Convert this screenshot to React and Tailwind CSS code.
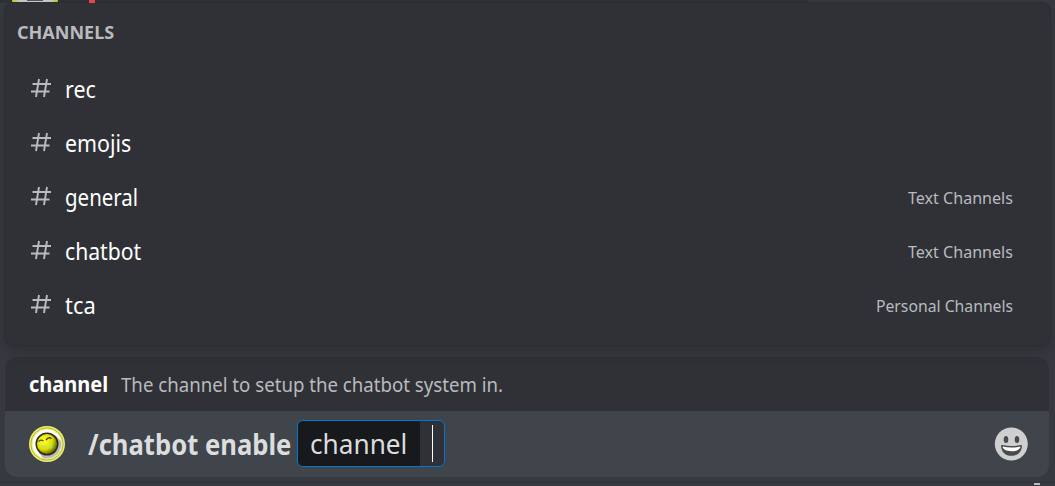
const channels = [
  { name: 'rec', fit: 'scale-x-[.93]' },
  { name: 'emojis', fit: 'scale-x-[.93]' },
  { name: 'general', fit: 'scale-x-[.89]', category: 'Text Channels', categoryFit: 'scale-x-[.946]' },
  { name: 'chatbot', fit: 'scale-x-[.92]', category: 'Text Channels', categoryFit: 'scale-x-[.946]' },
  { name: 'tca', fit: 'scale-x-[.95]', category: 'Personal Channels', categoryFit: 'scale-x-[.926]' },
];

function HashIcon() {
  return (
    <svg className="mb-1 h-5 w-5 shrink-0" viewBox="0 0 20 20" fill="none" stroke="#b9bbbe" strokeWidth="1.9">
      <path d="M8 1 5 19M16 1l-3 18M1.500 6H20M0 13.500h18.500" />
    </svg>
  );
}

function Avatar() {
  return (
    <svg className="h-9 w-9 shrink-0" viewBox="0 0 36 36">
      <defs>
        <radialGradient id="ball" cx=".35" cy=".35" r=".7">
          <stop offset="0" stopColor="#ffff35" />
          <stop offset=".6" stopColor="#dede00" />
          <stop offset="1" stopColor="#636300" />
        </radialGradient>
      </defs>
      <circle cx="18" cy="18" r="18" fill="#eeef70" />
      <circle cx="18" cy="18" r="16.2" fill="none" stroke="#b5b53b" strokeWidth="1" />
      <circle cx="18" cy="18" r="14.500" fill="#fff" />
      <path d="M26 9 32 15A14.500 14.500 0 0 1 14 32L10 27Z" fill="#b9b9bb" />
      <circle cx="18" cy="18" r="11.5" fill="#292b1d" />
      <circle cx="18" cy="18" r="10" fill="url(#ball)" />
      <path d="M9.500 15.500q2.500-2.500 5-.5M17 14q2.500-3.500 5.500-1.500" fill="none" stroke="#494900" strokeWidth="1.3" />
      <path d="m13 20 4 .5-2 2ZM21.500 18.500H23v4h-1.500Z" fill="#8ceb95" />
    </svg>
  );
}

function Smiley() {
  return (
    <svg className="h-[34px] w-[34px] shrink-0" viewBox="0 0 34 34">
      <circle cx="17.3" cy="17" r="16.5" fill="#cfcfcf" />
      <ellipse cx="12" cy="12.5" rx="2.3" ry="3.5" fill="#484b4c" />
      <ellipse cx="23" cy="12.5" rx="2.3" ry="3.5" fill="#484b4c" />
      <path d="M7 19q0-1.200 1.500-.9 9 2 18 0 1.500-.3 1.500.9c-.5 6.500-4.500 9.800-10.500 9.800S7.500 25.500 7 19Z" fill="#484b4c" />
      <path d="M8.500 19.600q9 2 18 0c-.4 2.900-3.500 4.600-9 4.600s-8.600-1.700-9-4.600Z" fill="#fff" />
    </svg>
  );
}

export default function App() {
  return (
    <div className="relative flex h-[486px] w-[1055px] flex-col overflow-hidden bg-[#36393f] pt-[3px] font-['Noto_Sans','Open_Sans',sans-serif]">
      <div className="absolute top-0 left-0 h-[3px] w-[808px] bg-[#2f3136]" />
      <div className="absolute top-0 left-3 h-[3px] w-[46px] rounded-b-full bg-[#c8cd4a]" />
      <div className="absolute top-0 left-[17px] h-[3px] w-9 rounded-b-full bg-[#cacace]" />
      <div className="absolute top-0 left-[27px] h-px w-4 bg-[#55575c]" />
      <section className="relative ml-[5px] h-[342px] w-[1045px] shrink-0 rounded-lg bg-[#2f3136] shadow-[0_0_0_1px_#2b2d31,0_6px_14px_#0003]">
        <h2 className="flex h-[60px] items-center pb-0.5 pl-3 text-[18px] font-bold text-[#b9bbbe]">CHANNELS</h2>
        <ul>
          {channels.map((c) => (
            <li key={c.name} className="flex h-[54px] items-center pr-[37px] pl-[26px]">
              <HashIcon />
              <span className={`mb-0.5 ml-3.5 origin-left text-[23px] text-white ${c.fit}`}>{c.name}</span>
              <span className={`ml-auto origin-right text-[17px] text-[#b9bbbe] ${c.categoryFit ?? ''}`}>{c.category}</span>
            </li>
          ))}
        </ul>
      </section>
      <div className="absolute top-0 left-[89px] h-[3px] w-1.5 bg-[#ed4245]" />
      <section className="mt-[12px] ml-[5px] h-[120px] w-[1044px] shrink-0 overflow-hidden rounded-xl bg-[#40444b]">
        <div className="flex h-[54px] items-center bg-[#2f3136] pl-6">
          <span className="mb-0.5 w-[92px] shrink-0 origin-left scale-x-[.91] text-[22px] leading-[52px] font-bold text-white">channel</span>
          <span className="mt-0.5 origin-left scale-x-[.932] text-[20px] whitespace-nowrap text-[#b9bbbe]">The channel to setup the chatbot system in.</span>
        </div>
        <div className="flex h-[66px] items-center pr-[21px] pl-6">
          <Avatar />
          <div className="ml-[23px] w-[209px] shrink-0">
            <span className="inline-block origin-left scale-x-[.915] text-[28px] font-bold whitespace-nowrap text-[#dcddde]">/chatbot enable</span>
          </div>
          <div className="mb-px flex h-[47px] w-[148px] items-stretch overflow-hidden rounded-md border border-[#0078d7] bg-[#2f3136]">
            <div className="flex w-[122px] items-center bg-[#18191c] pt-px pl-3">
              <span className="origin-left scale-x-[.97] text-[27px] text-[#dcddde]">channel</span>
            </div>
            <i className="my-1 ml-3 w-px bg-white" />
          </div>
          <span className="ml-auto"><Smiley /></span>
        </div>
      </section>
      <div className="mt-[5px] flex h-1 justify-end border-t border-[#303238] pr-[15px]">
        <i className="h-0.5 w-1.5 bg-[#b9bbbe]" />
      </div>
    </div>
  );
}
